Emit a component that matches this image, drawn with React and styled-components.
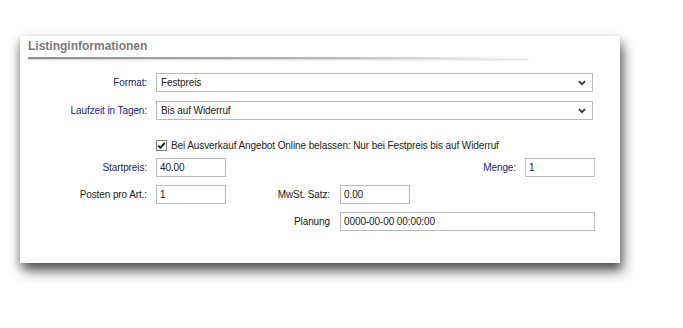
import styled, {createGlobalStyle} from "styled-components";

const GlobalStyle = createGlobalStyle`
    html, body {
        margin: 0;
        padding: 0;
        background: #fff;
        font-family: "Liberation Sans", Arial, sans-serif;
        font-size: 10px;
        letter-spacing: -0.1px;
        color: #222;
    }
`;

const Page = styled.div`
    width: 683px;
    height: 328px;
    padding: 36px 0 0 20px;
    box-sizing: border-box;
`;

const Panel = styled.div`
    width: 600px;
    height: 227px;
    background: #fff;
    box-shadow: 3px 8px 12px rgba(0, 0, 0, 0.6), -1px 4px 8px rgba(0, 0, 0, 0.25);
    box-sizing: border-box;
    padding-top: 1px;
`;

const Title = styled.div`
    padding: 2px 0 0 8px;
    height: 16px;
    font-size: 12px;
    font-weight: bold;
    letter-spacing: 0;
    color: #7a7a7a;
`;

const TitleRule = styled.div`
    margin: 2px 0 0 8px;
    width: 500px;
    height: 2px;
    background: linear-gradient(to right, #8c8c8c, #b8b8b8 60%, rgba(255, 255, 255, 0));
    box-shadow: 0 1px 2px rgba(0, 0, 0, 0.18);
`;

const TopGrid = styled.div`
    display: grid;
    grid-template-columns: 136px 437px;
    row-gap: 9px;
    margin-top: 14px;
    align-items: center;
`;

const Label = styled.label`
    text-align: right;
    padding-right: ${p => p.$pad || 9}px;
    color: ${p => p.$required ? "#23237e" : "#222"};
    white-space: nowrap;
`;

const SelectBox = styled.div`
    height: 19px;
    border: 1px solid #b9b9b9;
    box-sizing: border-box;
    display: flex;
    align-items: center;
    justify-content: space-between;
    padding: 0 6px 0 4px;
    background: #fff;
`;

const CheckRow = styled.div`
    display: flex;
    align-items: center;
    gap: 4px;
    margin: 18px 0 0 136px;
    height: 14px;
`;

const CheckBox = styled.span`
    width: 11px;
    height: 11px;
    border: 1px solid #808080;
    box-sizing: border-box;
    display: inline-flex;
    align-items: center;
    justify-content: center;
    background: #fff;
`;

const FieldGrid = styled.div`
    display: grid;
    grid-template-columns: 136px 70px 114px 70px 115px 70px;
    grid-auto-rows: 19px;
    row-gap: 8px;
    margin-top: 6px;
    align-items: center;
`;

const Input = styled.div`
    height: 19px;
    border: 1px solid #b9b9b9;
    box-sizing: border-box;
    display: flex;
    align-items: center;
    padding-left: 3px;
    background: #fff;
    grid-column: ${p => p.$span || "auto"};
`;

const Chevron = () => (
    <svg width="8" height="6" viewBox="0 0 8 6">
        <path d="M1 1.2 L4 4.2 L7 1.2" fill="none" stroke="#333" strokeWidth="1.8"/>
    </svg>
);

const App = () => {
    return (
        <Page>
            <GlobalStyle/>
            <Panel>
                <Title>Listinginformationen</Title>
                <TitleRule/>
                <TopGrid>
                    <Label $required>Format:</Label>
                    <SelectBox>Festpreis<Chevron/></SelectBox>
                    <Label $required>Laufzeit in Tagen:</Label>
                    <SelectBox>Bis auf Widerruf<Chevron/></SelectBox>
                </TopGrid>
                <CheckRow>
                    <CheckBox>
                        <svg width="9" height="9" viewBox="0 0 9 9">
                            <path d="M1.2 4.6 L3.4 6.8 L7.8 1.8" fill="none" stroke="#111" strokeWidth="1.8"/>
                        </svg>
                    </CheckBox>
                    <span>Bei Ausverkauf Angebot Online belassen: Nur bei Festpreis bis auf Widerruf</span>
                </CheckRow>
                <FieldGrid>
                    <Label $required>Startpreis:</Label>
                    <Input>40.00</Input>
                    <span/>
                    <span/>
                    <Label $required>Menge:</Label>
                    <Input>1</Input>

                    <Label>Posten pro Art.:</Label>
                    <Input>1</Input>
                    <Label $pad={10}>MwSt. Satz:</Label>
                    <Input>0.00</Input>
                    <span/>
                    <span/>

                    <Label style={{gridColumn: "3"}} $pad={10}>Planung</Label>
                    <Input $span="4 / 7">0000-00-00 00:00:00</Input>
                </FieldGrid>
            </Panel>
        </Page>
    );
};

export default App;
